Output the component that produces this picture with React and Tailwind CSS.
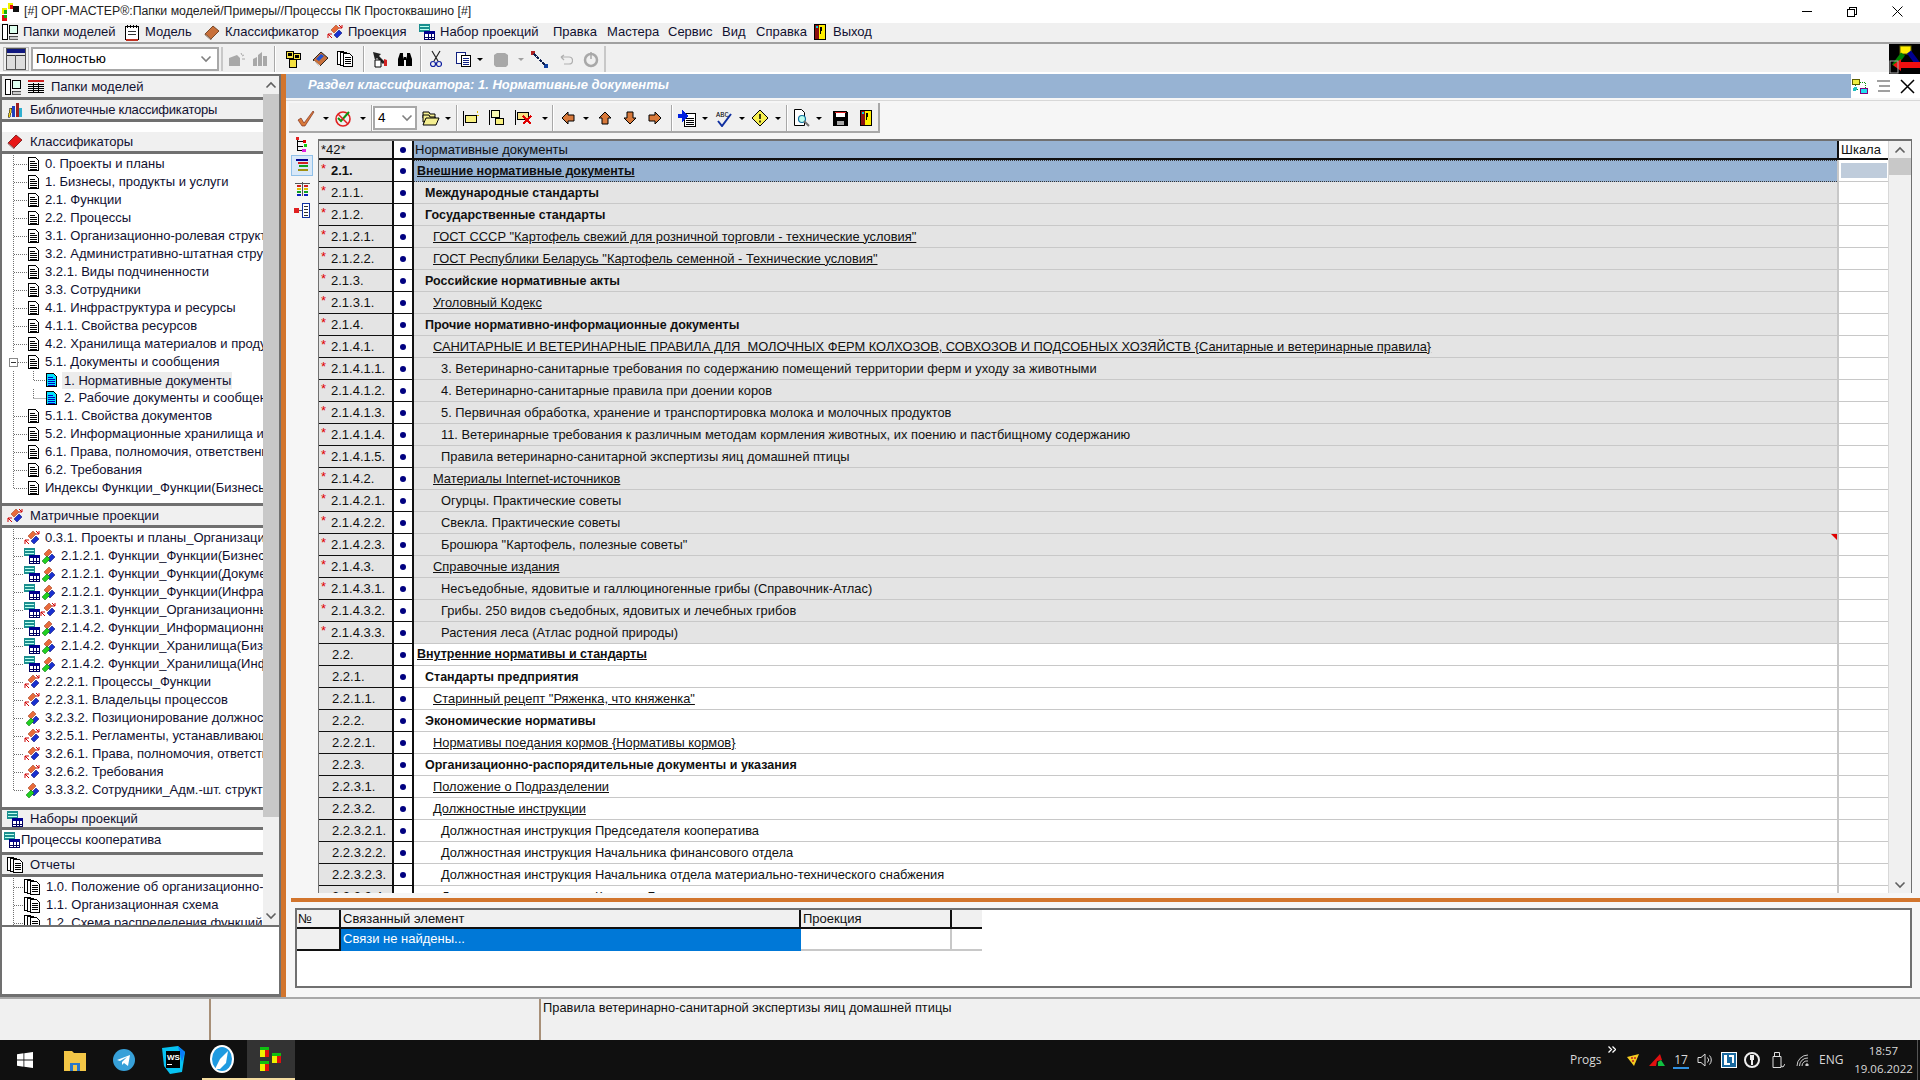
import React from 'react';

const Svg = ({ w = 16, h = 16, vb, className = '', children }) => (
	<svg width={w} height={h} viewBox={vb || `0 0 ${w} ${h}`} className={`shrink-0 ${className}`} shapeRendering="crispEdges">
		{children}
	</svg>
);

// small app icons, all drawn by hand
const DocIcon = ({ blue }) => (
	<Svg w={11} h={14}>
		<path d="M.5.5h7l3 3v10H.5z" fill={blue ? '#00e0ff' : '#fff'} stroke="#000" />
		<path d="M2 4h5M2 6h7M2 8h7M2 10h7M2 12h7" stroke={blue ? '#0000c0' : '#000'} />
	</Svg>
);
const ReportIcon = () => (
	<Svg w={16} h={16}>
		<path d="M.5.5h6v13h-6z" fill="#fff" stroke="#000" />
		<path d="M3.5 1.5h6v13h-6z" fill="#fff" stroke="#000" />
		<path d="M6.5 2.5h6l3 3v10h-9z" fill="#fff" stroke="#000" />
		<path d="M8 6h6M8 8h6M8 10h6M8 12h6" stroke="#000" />
	</Svg>
);
const SetIcon = () => (
	<Svg w={16} h={16}>
		<rect x="0" y="0" width="11" height="8" fill="#1a8f8f" />
		<path d="M1 2h9M1 5h9" stroke="#bfe" />
		<rect x="5.5" y="7.5" width="10" height="8" fill="#fff" stroke="#000060" />
		<rect x="5" y="7" width="11" height="3" fill="#000090" />
		<path d="M9 10v6M12.500 10v6M5 13h11" stroke="#000060" />
	</Svg>
);
const PairIcon = ({ tone = 'green' }) => (
	<svg width="16" height="16" viewBox="0 0 16 16" className="shrink-0">
		<path d="M9 1l3 3-5 5-3-3z" fill="#e86a3a" stroke="#903010" strokeWidth=".5" />
		<path d="M12 6l3 3-5 5-3-3z" fill="#1830d0" stroke="#000060" strokeWidth=".5" />
		{tone === 'green' && <path d="M7 8l3 3-5 5-3-3z" fill="#20d020" stroke="#086008" strokeWidth=".5" />}
		{tone === 'arrow' && <path d="M1 10l4 4M1 14v-4h4M12 1l3 3M15 1v3h-3" fill="none" stroke="#d00000" strokeWidth="1" />}
	</svg>
);
const Caret = ({ gray }) => <span className={`w-0 h-0 shrink-0 border-x-[3px] border-x-transparent border-t-[3px] ${gray ? 'border-t-[#a0a0a0]' : 'border-t-black'}`} />;
const CaretBox = () => <div className="flex items-center justify-center shrink-0 w-[15px] h-full"><Caret /></div>;
const Chevron = ({ up, gray }) => (
	<svg width="12" height="8" viewBox="0 0 12 8" className="shrink-0">
		<path d={up ? 'M1.500 6.500L6 2l4.500 4.500' : 'M1.500 1.500L6 6l4.500-4.500'} fill="none" stroke={gray ? '#808080' : '#606060'} strokeWidth="1.600" />
	</svg>
);
const Door = ({ s = 16 }) => (
	<Svg w={s} h={s} vb="0 0 16 16">
		<rect x="2.500" y=".5" width="11" height="15" fill="#ffee00" stroke="#000" />
		<path d="M3 1h4v14H3z" fill="#8a1010" />
		<path d="M8 3h2v4H9v3H8z" fill="#000" />
		<rect x="4" y="2" width="2" height="2" fill="#00d0e0" />
	</Svg>
);
const Sep = () => <span className="w-[2px] h-full shrink-0 bg-[#a8a8a8] border-r border-white" />;

const Arrow = ({ d }) => {
	const rot = { left: 'rotate-0', right: 'rotate-180', up: 'rotate-90', down: '-rotate-90' }[d];
	return (
		<svg width="14" height="14" viewBox="0 0 14 14" className={`shrink-0 ${rot}`}>
			<path d="M1 7l6-6v3h6v6H7v3z" fill="#d8793a" stroke="#000" strokeWidth="1" />
		</svg>
	);
};

const Tb = ({ w, children }) => <div className={`flex items-center justify-center shrink-0 h-full ${w}`}>{children}</div>;

const MainMenu = () => {
	const items = [
		['Папки моделей', 'w-[122px]', <Svg key="a" w={16} h={16}><rect x=".5" y=".5" width="5" height="15" fill="#fff" stroke="#000" /><rect x="7.500" y="1.500" width="8" height="8" fill="#dfe" stroke="#000" /><path d="M7 12h9v3H7z" fill="#ccc" stroke="#000" strokeWidth=".6" /></Svg>],
		['Модель', 'w-[80px]', <Svg key="b" w={16} h={17}><rect x="1.500" y="2.500" width="13" height="13" fill="#fff" stroke="#000" /><path d="M3 1v3M6 1v3M9 1v3M12 1v3" stroke="#000" /><path d="M4 7h8M4 10h8" stroke="#333" /><path d="M2 15h12v2H2z" fill="#c03020" /></Svg>],
		['Классификатор', 'w-[123px]', <svg key="c" width="16" height="16" viewBox="0 0 16 16" className="shrink-0"><path d="M1 10L9 2l6 5-8 8z" fill="#c8703a" stroke="#603010" strokeWidth=".8" /><path d="M1 10l6 5v1l-6-5z" fill="#eee" stroke="#603010" strokeWidth=".5" /></svg>],
		['Проекция', 'w-[92px]', <PairIcon key="d" tone="arrow" />],
		['Набор проекций', 'w-[136px]', <SetIcon key="e" />],
	];
	const plain = [['Правка', 'w-[54px]'], ['Мастера', 'w-[61px]'], ['Сервис', 'w-[54px]'], ['Вид', 'w-[34px]'], ['Справка', 'w-[56px]']];
	return (
		<div className="flex items-center h-[21px] pb-[1px] bg-[#f0f0f0] border-b-2 border-[#a0a0a0] shrink-0 text-[13px] text-[#101030] whitespace-nowrap">
			{items.map(([t, w, ic]) => (
				<div key={t} className={`flex items-center gap-[5px] shrink-0 pl-[2px] ${w}`}>{ic}<span>{t}</span></div>
			))}
			{plain.map(([t, w]) => <div key={t} className={`shrink-0 ${w}`}>{t}</div>)}
			<Door />
			<span className="ml-[5px]">Выход</span>
		</div>
	);
};

const TopToolbar = () => (
	<div className="flex h-[30px] bg-[#f0f0f0] shrink-0 pt-[2px] border-b-[2px] border-white">
		<div className="flex items-center h-full pl-[3px]">
			<div className="w-[26px] h-[24px] border border-[#bbb] flex items-center justify-center">
				<Svg w={20} h={22}>
					<rect x=".5" y=".5" width="19" height="21" fill="#ddd" stroke="#555" />
					<rect x="1" y="1" width="18" height="4" fill="#101880" />
					<path d="M1 7h18" stroke="#333" /><path d="M9.500 7v14" stroke="#555" />
				</Svg>
			</div>
			<div className="ml-[2px] w-[188px] h-[24px] border-2 border-[#a8a8a8] bg-white flex items-center justify-between pl-[3px] pr-[5px] text-[13.500px]">
				<span>Полностью</span><Chevron gray />
			</div>
			<span className="w-[2px] h-[24px] ml-[2px] mr-[2px] bg-[#c8c8c8]" />
		</div>
		<Tb w="w-[23px]"><svg width="18" height="16" viewBox="0 0 18 16"><path d="M1 15V7l8-3 3 3v8z" fill="#a8a8a8" /><path d="M13 2l1 2M16 4l-2 1M17 8h-3" stroke="#a8a8a8" /></svg></Tb>
		<Tb w="w-[24px]"><svg width="16" height="16" viewBox="0 0 16 16"><path d="M1 15V8l4-2v9zM6 15V4l4-3v14zM11 15V5h4v10z" fill="#a8a8a8" /></svg></Tb>
		<Tb w="w-[6px]"><Sep /></Tb>
		<Tb w="w-[30px]"><Svg w={16} h={17}><rect x="1.500" y=".5" width="7" height="7" fill="#f4e040" stroke="#000" /><rect x="8.500" y="2.500" width="7" height="6" fill="#f4e040" stroke="#000" /><rect x="4.500" y="8.500" width="7" height="8" fill="#f4e040" stroke="#000" /><path d="M3 2h4v3H3zM10 4h4v3h-4z" fill="#000" /></Svg></Tb>
		<Tb w="w-[24px]"><svg width="17" height="16" viewBox="0 0 17 16"><path d="M1 9l8-8 7 6-8 8z" fill="#c8703a" stroke="#000" strokeWidth=".8" /><path d="M4 8l5-5 3 2-5 5z" fill="#2050d0" /><path d="M2 10l6 5" stroke="#fff" /></svg></Tb>
		<Tb w="w-[26px]"><ReportIcon /></Tb>
		<Tb w="w-[12px]"><Sep /></Tb>
		<Tb w="w-[20px]"><svg width="17" height="18" viewBox="0 0 17 18"><path d="M1 2l8 2-2 2 6 6-2 2-6-6-2 2z" fill="#222" /><path d="M3 10h6v7H3z" fill="#fff" stroke="#000" /><path d="M12 9l3 1v6h-3z" fill="#d02020" /></svg></Tb>
		<Tb w="w-[30px]"><svg width="16" height="15" viewBox="0 0 16 15"><path d="M3 1h3v3l1 3v7H1V7zM10 1h3l2 6v7H9V7l1-3zM7 5h2v3H7z" fill="#000" /></svg></Tb>
		<Tb w="w-[2px]"><Sep /></Tb>
		<Tb w="w-[28px]"><svg width="12" height="18" viewBox="0 0 12 18"><path d="M2 1l6 10M10 1L4 11" stroke="#222" strokeWidth="1.200" /><circle cx="3" cy="14" r="2.500" fill="none" stroke="#1020a0" strokeWidth="1.200" /><circle cx="9" cy="14" r="2.500" fill="none" stroke="#1020a0" strokeWidth="1.200" /></svg></Tb>
		<Tb w="w-[26px]"><Svg w={15} h={15}><rect x=".5" y=".5" width="9" height="11" fill="#fff" stroke="#102080" /><rect x="5.500" y="3.500" width="9" height="11" fill="#fff" stroke="#000" /><path d="M7 6h6M7 8h6M7 10h6M7 12h6" stroke="#102080" /></Svg></Tb>
		<Tb w="w-[8px]"><Caret /></Tb>
		<Tb w="w-[34px]"><svg width="17" height="15" viewBox="0 0 17 15"><path d="M1 3l3-2h8l3 2v10l-2 2H3l-2-2z" fill="#a8a8a8" /></svg></Tb>
		<Tb w="w-[6px]"><Caret gray /></Tb>
		<Tb w="w-[30px]"><Svg w={17} h={17}><rect x="0" y="0" width="4" height="4" fill="#b02020" /><rect x="13" y="13" width="4" height="4" fill="#1040a0" /><path d="M3 3l11 11" stroke="#102050" strokeWidth="2" strokeDasharray="3 1" /></Svg></Tb>
		<Tb w="w-[24px]"><svg width="13" height="11" viewBox="0 0 13 11"><path d="M1 3h8a3 3 0 010 7H4M1 3l3-2M1 3l3 3" fill="none" stroke="#b0b0b0" strokeWidth="1.200" /></svg></Tb>
		<Tb w="w-[26px]"><svg width="16" height="17" viewBox="0 0 16 17"><circle cx="8" cy="9" r="6" fill="none" stroke="#a8a8a8" strokeWidth="2.500" /><path d="M8 1v7" stroke="#a8a8a8" strokeWidth="1.500" /></svg></Tb>
		<span className="w-[2px] h-full bg-[#c8c8c8]" />
		<div className="ml-auto -mt-[2px] w-[31px] h-[30px] bg-black flex items-center justify-center">
			<svg width="31" height="30" viewBox="0 0 31 30">
				<rect x="11" y="2" width="11" height="8" fill="#ffee00" stroke="#606000" />
				<path d="M14 10L5 22" stroke="#008000" strokeWidth="5" />
				<path d="M20 8l9 12" stroke="#000090" strokeWidth="5" />
				<path d="M4 21l8-6v3h19v6H12v3z" fill="#f01010" />
				<rect x="1" y="17" width="8" height="12" fill="none" stroke="#aaa" strokeWidth="1" />
			</svg>
		</div>
	</div>
);

const TREE_1 = [
	'0. Проекты и планы', '1. Бизнесы, продукты и услуги', '2.1. Функции', '2.2. Процессы',
	'3.1. Организационно-ролевая структура', '3.2. Административно-штатная структура', '3.2.1. Виды подчиненности',
	'3.3. Сотрудники', '4.1. Инфраструктура и ресурсы', '4.1.1. Свойства ресурсов', '4.2. Хранилища материалов и продукции',
];
const TREE_2 = ['5.1.1. Свойства документов', '5.2. Информационные хранилища и потоки', '6.1. Права, полномочия, ответственность', '6.2. Требования', 'Индексы Функции_Функции(Бизнесы)'];
const MATRIX = [
	['0.3.1. Проекты и планы_Организационная', 'arrow', false], ['2.1.2.1. Функции_Функции(Бизнесы)', 'green', true], ['2.1.2.1. Функции_Функции(Документы)', 'green', true],
	['2.1.2.1. Функции_Функции(Инфраструктура)', 'green', true], ['2.1.3.1. Функции_Организационные', 'arrow', true], ['2.1.4.2. Функции_Информационные', 'green', true],
	['2.1.4.2. Функции_Хранилища(Бизнесы)', 'green', true], ['2.1.4.2. Функции_Хранилища(Инфра)', 'green', true], ['2.2.2.1. Процессы_Функции', 'arrow', false],
	['2.2.3.1. Владельцы процессов', 'arrow', false], ['3.2.3.2. Позиционирование должностей', 'green', false], ['3.2.5.1. Регламенты, устанавливающие', 'arrow', false],
	['3.2.6.1. Права, полномочия, ответственность', 'arrow', false], ['3.2.6.2. Требования', 'arrow', false], ['3.3.3.2. Сотрудники_Адм.-шт. структура', 'green', false],
];

const Branch = ({ w = 15, last }) => (
	<svg width={w} height="18" viewBox={`0 0 ${w} 18`} className="shrink-0">
		<path d={`M.5 0V${last ? 9 : 18}M1 9.500H${w}`} stroke="#707070" strokeDasharray="1 1" fill="none" />
	</svg>
);

const TreeRow = ({ icon, children, last, w, gap = 'gap-[6px]' }) => (
	<div className="flex items-center h-[18px] pl-[11px] whitespace-nowrap overflow-hidden">
		<Branch last={last} w={w} />
		<span className={`flex items-center ${gap}`}>{icon}<span>{children}</span></span>
	</div>
);

const PanelHead = ({ icon, children, tall, gap = 'gap-[7px]' }) => (
	<div className={`flex items-center ${gap} pl-[5px] border-b-[3px] border-[#707070] bg-[#f0f0f0] shrink-0 ${tall || 'h-[22px]'}`}>
		{icon}<span className="whitespace-nowrap">{children}</span>
	</div>
);

const BooksIcon = () => (
	<Svg w={16} h={16}><path d="M1 15l2-9h2l-2 9z" fill="#f0d020" stroke="#000" strokeWidth=".5" /><rect x="5" y="4" width="3" height="11" fill="#2040c0" /><rect x="8.500" y="1" width="3" height="14" fill="#a02020" /><rect x="12" y="6" width="3" height="9" fill="#30b0d0" /></Svg>
);
const RedBook = () => (
	<svg width="16" height="15" viewBox="0 0 16 15" className="shrink-0"><path d="M1 9l8-8 6 5-8 8z" fill="#e81818" stroke="#701010" strokeWidth=".8" /><path d="M1 9l6 5v1L1 10z" fill="#ddd" stroke="#701010" strokeWidth=".4" /></svg>
);

const LeftPanel = () => (
	<div className="w-[281px] shrink-0 flex flex-col bg-white border-2 border-[#707070] border-b-[3px] overflow-hidden">
		<div className="flex h-[849px] shrink-0">
			<div className="w-[261px] shrink-0 flex flex-col overflow-hidden pt-[1px] bg-[#f0f0f0] text-[13px] text-[#101030]">
				<PanelHead tall="h-[23px]" icon={
					<span className="flex items-center gap-[7px] -ml-[2px]">
						<Svg w={16} h={16}><rect x=".5" y=".5" width="5" height="15" fill="#fff" stroke="#000" /><rect x="7.500" y="1.500" width="8" height="8" fill="#dfe" stroke="#000" /><path d="M7 12h9v3H7z" fill="#ccc" stroke="#000" strokeWidth=".6" /></Svg>
						<Svg w={16} h={14}><path d="M0 1h16" stroke="#d02020" strokeWidth="2" /><path d="M0 4h16M0 6h16M0 8h16M0 10h16M0 12h16M5 3v10M10.500 3v10" stroke="#000" /></Svg>
					</span>
				}>Папки моделей</PanelHead>
				<PanelHead icon={<BooksIcon />}><span className="tracking-[-0.2px]">Библиотечные классификаторы</span></PanelHead>
				<div className="h-[10px] shrink-0 bg-white" />
				<PanelHead icon={<RedBook />}>Классификаторы</PanelHead>
				<div className="pt-[1px] shrink-0 bg-white">
					{TREE_1.map(t => <TreeRow key={t} icon={<DocIcon />}>{t}</TreeRow>)}
					<div className="flex items-center h-[18px] pl-[7px] whitespace-nowrap">
						<span className="w-[9px] h-[9px] border border-[#888] bg-white flex items-center justify-center shrink-0"><span className="w-[5px] h-[1px] bg-[#333]" /></span>
						<svg width="10" height="18" className="shrink-0"><path d="M0 9.500H10" stroke="#707070" strokeDasharray="1 1" /></svg>
						<span className="flex items-center gap-[6px]"><DocIcon /><span>5.1. Документы и сообщения</span></span>
					</div>
					<div className="flex items-center h-[18px] pl-[11px] whitespace-nowrap">
						<svg width="33" height="18" className="shrink-0"><path d="M.5 0V18M20.500 0V9.500H33" stroke="#707070" strokeDasharray="1 1" fill="none" /></svg>
						<DocIcon blue />
						<span className="ml-[5px] px-[2px] bg-[#ececec] w-[170px] leading-[17px]">1. Нормативные документы</span>
					</div>
					<div className="flex items-center h-[18px] pl-[11px] whitespace-nowrap overflow-hidden">
						<svg width="33" height="18" className="shrink-0"><path d="M.5 0V18M20.500 0V9.500" stroke="#707070" strokeDasharray="1 1" fill="none" /><path d="M20.500 9.500H33" stroke="#707070" strokeDasharray="1 1" /></svg>
						<DocIcon blue />
						<span className="ml-[7px]">2. Рабочие документы и сообщения</span>
					</div>
					{TREE_2.map((t, i) => <TreeRow key={t} last={i === TREE_2.length - 1} icon={<DocIcon />}>{t}</TreeRow>)}
				</div>
				<div className="h-[9px] shrink-0 bg-white border-b-[3px] border-[#707070]" />
				<PanelHead icon={<PairIcon tone="arrow" />}>Матричные проекции</PanelHead>
				<div className="pt-[1px] shrink-0 bg-white">
					{MATRIX.map(([t, tone, dbl], i) => (
						<TreeRow key={t} w={11} last={i === MATRIX.length - 1} gap="gap-[5px]" icon={dbl ? <span className="flex"><SetIcon /><PairIcon tone={tone} /></span> : <PairIcon tone={tone} />}>{t}</TreeRow>
					))}
				</div>
				<div className="h-[11px] shrink-0 bg-white border-b-[3px] border-[#707070]" />
				<PanelHead tall="h-[20px]" icon={<SetIcon />}>Наборы проекций</PanelHead>
				<div className="flex items-center h-[25px] shrink-0 pl-[2px] pb-[2px] gap-[1px] bg-white border-b-[3px] border-[#707070]"><SetIcon /><span>Процессы кооператива</span></div>
				<PanelHead icon={<ReportIcon />}>Отчеты</PanelHead>
				<div className="pt-[1px] flex-1 bg-white overflow-hidden">
					{['1.0. Положение об организационно-функциональной', '1.1. Организационная схема', '1.2. Схема распределения функций'].map(t => (
						<TreeRow key={t} w={11} icon={<ReportIcon />}>{t}</TreeRow>
					))}
				</div>
			</div>
			<div className="w-[16px] shrink-0 bg-[#f0f0f0] flex flex-col">
				<div className="h-[18px] flex items-center justify-center shrink-0"><Chevron up /></div>
				<div className="h-[723px] bg-[#c8c8c8] shrink-0" />
				<div className="flex-1" />
				<div className="h-[18px] flex items-center justify-center shrink-0"><Chevron /></div>
			</div>
		</div>
		<div className="flex-1 border-t-2 border-[#707070]" />
	</div>
);

const R = (star, code, title, lvl, kind) => ({ star, code, title, lvl, kind });
const ROWS = [
	R(1, '2.1.', 'Внешние нормативные документы', 0, 'bu'),
	R(1, '2.1.1.', 'Международные стандарты', 1, 'b'),
	R(1, '2.1.2.', 'Государственные стандарты', 1, 'b'),
	R(1, '2.1.2.1.', 'ГОСТ СССР "Картофель свежий для розничной торговли - технические условия"', 2, 'u'),
	R(1, '2.1.2.2.', 'ГОСТ Республики Беларусь "Картофель семенной - Технические условия"', 2, 'u'),
	R(1, '2.1.3.', 'Российские нормативные акты', 1, 'b'),
	R(1, '2.1.3.1.', 'Уголовный Кодекс', 2, 'u'),
	R(1, '2.1.4.', 'Прочие нормативно-информационные документы', 1, 'b'),
	R(1, '2.1.4.1.', 'САНИТАРНЫЕ И ВЕТЕРИНАРНЫЕ ПРАВИЛА ДЛЯ  МОЛОЧНЫХ ФЕРМ КОЛХОЗОВ, СОВХОЗОВ И ПОДСОБНЫХ ХОЗЯЙСТВ {Санитарные и ветеринарные правила}', 2, 'u'),
	R(1, '2.1.4.1.1.', '3. Ветеринарно-санитарные требования по содержанию помещений территории ферм и уходу за животными', 3),
	R(1, '2.1.4.1.2.', '4. Ветеринарно-санитарные правила при доении коров', 3),
	R(1, '2.1.4.1.3.', '5. Первичная обработка, хранение и транспортировка молока и молочных продуктов', 3),
	R(1, '2.1.4.1.4.', '11. Ветеринарные требования к различным методам кормления животных, их поению и пастбищному содержанию', 3),
	R(1, '2.1.4.1.5.', 'Правила ветеринарно-санитарной экспертизы яиц домашней птицы', 3),
	R(1, '2.1.4.2.', 'Материалы Internet-источников', 2, 'u'),
	R(1, '2.1.4.2.1.', 'Огурцы. Практические советы', 3),
	R(1, '2.1.4.2.2.', 'Свекла. Практические советы', 3),
	R(1, '2.1.4.2.3.', 'Брошюра "Картофель, полезные советы"', 3, 'flag'),
	R(1, '2.1.4.3.', 'Справочные издания', 2, 'u'),
	R(1, '2.1.4.3.1.', 'Несъедобные, ядовитые и галлюциногенные грибы (Справочник-Атлас)', 3),
	R(1, '2.1.4.3.2.', 'Грибы. 250 видов съедобных, ядовитых и лечебных грибов', 3),
	R(1, '2.1.4.3.3.', 'Растения леса (Атлас родной природы)', 3),
	R(0, '2.2.', 'Внутренние нормативы и стандарты', 0, 'bu'),
	R(0, '2.2.1.', 'Стандарты предприятия', 1, 'b'),
	R(0, '2.2.1.1.', 'Старинный рецепт "Ряженка, что княженка"', 2, 'u'),
	R(0, '2.2.2.', 'Экономические нормативы', 1, 'b'),
	R(0, '2.2.2.1.', 'Нормативы поедания кормов {Нормативы кормов}', 2, 'u'),
	R(0, '2.2.3.', 'Организационно-распорядительные документы и указания', 1, 'b'),
	R(0, '2.2.3.1.', 'Положение о Подразделении', 2, 'u'),
	R(0, '2.2.3.2.', 'Должностные инструкции', 2, 'u'),
	R(0, '2.2.3.2.1.', 'Должностная инструкция Председателя кооператива', 3),
	R(0, '2.2.3.2.2.', 'Должностная инструкция Начальника финансового отдела', 3),
	R(0, '2.2.3.2.3.', 'Должностная инструкция Начальника отдела материально-технического снабжения', 3),
	R(0, '2.2.3.2.4.', 'Должностная инструкция Кассира Бухгалтерии', 3),
];
const INDENT = ['pl-[3px]', 'pl-[11px]', 'pl-[19px]', 'pl-[27px]'];

const Dot = () => <span className="w-[6px] h-[6px] rounded-full bg-[#000080]" />;

const Row = ({ r, idx }) => {
	const selected = idx === 0;
	const gray = !!r.star;
	const txt = r.kind === 'bu' ? 'font-bold underline text-[12.500px]' : r.kind === 'b' ? 'font-bold text-[12.500px] pt-[1px]' : r.kind === 'u' ? 'underline text-[12.870px]' : 'text-[12.870px]';
	return (
		<div className="flex h-[22px] shrink-0">
			<div className={`w-[75px] shrink-0 flex items-center bg-[#e4e4e4] border-b border-r-2 border-[#101010] pl-[2px] ${r.kind === 'bu' && r.star ? 'font-bold' : ''}`}>
				<span className="w-[10px] shrink-0 text-[#e00000] font-normal self-start leading-[18px]">{r.star ? '*' : ''}</span>
				<span className={r.star ? '' : 'pl-[1px]'}>{r.code}</span>
			</div>
			<div className="w-[20px] shrink-0 flex items-center justify-center bg-white border-b border-r-2 border-[#101010]"><Dot /></div>
			<div className={`relative flex-1 flex items-center whitespace-pre border-b ${selected ? 'bg-[#97b3d3] border-dotted border-[#333] border-t' : gray ? 'bg-[#e4e4e4] border-[#c8c8c8]' : 'bg-white border-[#c8c8c8]'} ${INDENT[r.lvl]} ${txt}`}>
				{r.title}
				{r.kind === 'flag' && <span className="absolute right-0 top-0 w-0 h-0 border-l-[6px] border-l-transparent border-t-[6px] border-t-[#e00000]" />}
			</div>
			<div className="w-[51px] shrink-0 bg-white border-b border-l-2 border-[#c8c8c8] p-[2px]">
				{selected && <div className="w-[46px] h-[15px] mt-[1px] bg-[#bfccdb]" />}
			</div>
		</div>
	);
};

const GridToolbar = () => (
	<div className="flex items-center h-[30px] w-[591px] ml-[3px] pt-[2px] bg-[#f0f0f0] border-b-2 border-r-2 border-[#a8a8a8] shrink-0">
		<Tb w="w-[24px] ml-[5px]"><svg width="18" height="17" viewBox="0 0 18 17"><path d="M1 10l3-2 3 5L16 1l1 1-9 14H5z" fill="#d8793a" stroke="#702010" strokeWidth=".6" /></svg></Tb>
		<CaretBox />
		<Tb w="w-[22px]"><svg width="18" height="17" viewBox="0 0 18 17"><circle cx="8" cy="9" r="7" fill="none" stroke="#e02020" strokeWidth="1.600" /><path d="M3 8l3 3 8-9" fill="none" stroke="#109010" strokeWidth="2" /><path d="M3 4l10 10" stroke="#e02020" strokeWidth="1.500" /></svg></Tb>
		<CaretBox />
		<Tb w="w-[2px] ml-[1px]"><Sep /></Tb>
		<div className="w-[44px] h-[24px] border-2 border-[#a8a8a8] bg-white flex items-center justify-between pl-[3px] pr-[2px] text-[13.500px] shrink-0"><span>4</span><Chevron gray /></div>
		<Tb w="w-[19px] ml-[4px]"><svg width="18" height="18" viewBox="0 0 18 18"><path d="M1 3h6l1 2h5v4H1z" fill="#f4ee90" stroke="#000" /><path d="M1 6h6l1 2h5v5H1z" fill="#f4ee90" stroke="#000" /><path d="M1 16l3-7h13l-3 7z" fill="#f4ee90" stroke="#000" /></svg></Tb>
		<CaretBox />
		<Tb w="w-[2px] ml-[1px]"><Sep /></Tb>
		<Tb w="w-[26px]"><Svg w={18} h={17}><path d="M1.500 1v15" stroke="#000" /><rect x="3.500" y="5.500" width="11" height="7" fill="#f8f080" stroke="#000" /><path d="M15 1l1 2M17 5l-2 0" stroke="#e0c000" /></Svg></Tb>
		<Tb w="w-[26px]"><Svg w={18} h={18}><path d="M1.500 1v15" stroke="#000" /><rect x="3.500" y="1.500" width="8" height="7" fill="#f8f8b0" stroke="#000" /><rect x="7.500" y="9.500" width="8" height="6" fill="#f8f080" stroke="#000" /></Svg></Tb>
		<Tb w="w-[27px]"><Svg w={20} h={18}><path d="M1.500 1v15" stroke="#000" /><rect x="3.500" y="3.500" width="11" height="7" fill="#f8e080" stroke="#000" /><path d="M9 7l8 8M17 7l-8 8" stroke="#e00000" strokeWidth="2" /></Svg></Tb>
		<CaretBox />
		<Tb w="w-[2px]"><Sep /></Tb>
		<Tb w="w-[21px] ml-[3px]"><Arrow d="left" /></Tb>
		<CaretBox />
		<Tb w="w-[24px]"><Arrow d="up" /></Tb>
		<Tb w="w-[26px]"><Arrow d="down" /></Tb>
		<Tb w="w-[24px]"><Arrow d="right" /></Tb>
		<Tb w="w-[2px] ml-[4px]"><Sep /></Tb>
		<Tb w="w-[21px] ml-[3px]"><Svg w={18} h={17}><rect x="6.500" y="3.500" width="11" height="13" fill="#fff" stroke="#000" /><path d="M8 8h8M8 10h8M8 12h8M8 14h8" stroke="#000" /><path d="M0 4h4V0l6 6-6 6V8H0z" fill="#0020e0" /></Svg></Tb>
		<CaretBox />
		<Tb w="w-[22px]"><svg width="17" height="17" viewBox="0 0 17 17"><path d="M3 11l4 5L16 4" fill="none" stroke="#1030a0" strokeWidth="2" /><text x="1" y="7" fontSize="7" fontFamily="Liberation Mono" fill="#000">ABC</text></svg></Tb>
		<CaretBox />
		<Tb w="w-[20px] ml-[1px]"><svg width="18" height="18" viewBox="0 0 18 18"><path d="M9 1l8 8-8 8-8-8z" fill="#f8f050" stroke="#000" /><path d="M9 5v5M9 11.500v2" stroke="#000" strokeWidth="1.500" /></svg></Tb>
		<CaretBox />
		<Tb w="w-[2px] ml-[1px]"><Sep /></Tb>
		<Tb w="w-[20px] ml-[3px]"><svg width="18" height="18" viewBox="0 0 18 18"><path d="M2.500.5h7l3 3v13h-10z" fill="#fff" stroke="#000" /><circle cx="10" cy="10" r="3.500" fill="#bfe" stroke="#1070a0" strokeWidth="1.200" /><path d="M12 12l5 5" stroke="#707070" strokeWidth="2" /></svg></Tb>
		<CaretBox />
		<Tb w="w-[28px]"><Svg w={15} h={15}><path d="M0 0h13l2 2v13H0z" fill="#000" /><rect x="3" y="1" width="9" height="5" fill="#fff" /><rect x="2" y="1" width="11" height="1" fill="#e02020" /><rect x="4" y="10" width="7" height="4" fill="#aaa" /></Svg></Tb>
		<Tb w="w-[24px]"><Door /></Tb>
	</div>
);

const SideStrip = () => (
	<div className="w-[29px] ml-[3px] pr-[3px] -mt-[3px] shrink-0 flex flex-col items-center">
		<div className="h-[17px] flex items-center"><Svg w={12} h={15}><path d="M1.500 0v14M2 4h5M2 9h5M2 13h4" stroke="#000" /><rect x="0" y="0" width="3" height="3" fill="#e02020" /><rect x="7" y="3" width="3" height="3" fill="#d00" /><rect x="8" y="7" width="3" height="3" fill="#10d010" /><rect x="6" y="12" width="4" height="3" fill="#e020e0" /></Svg></div>
		<div className="w-[22px] h-[21px] mt-[2px] bg-[#d8e8f8] border border-[#90c0e8] flex items-center justify-center"><Svg w={14} h={13}><path d="M1 1h12" stroke="#000090" strokeWidth="2" /><path d="M3 4h10" stroke="#d02020" strokeWidth="2" /><path d="M4 7h9" stroke="#10a020" strokeWidth="2" /><path d="M3 11h10" stroke="#a09010" strokeWidth="2" /></Svg></div>
		<div className="h-[20px] mt-[3px] flex items-center"><Svg w={15} h={14}><path d="M0 1h15M7.500 0v14" stroke="#555" /><path d="M2 4h4M9 4h4" stroke="#d02020" strokeWidth="2" /><path d="M2 7h4M9 7h4" stroke="#e0c000" strokeWidth="2" /><path d="M2 10h4M9 10h4" stroke="#10a020" strokeWidth="2" /><path d="M2 13h4M9 13h4" stroke="#1020c0" strokeWidth="2" /></Svg></div>
		<div className="h-[20px] mt-[1px] flex items-center"><Svg w={16} h={15}><rect x="0" y="5" width="5" height="5" fill="#e02020" /><path d="M5 7h3M8 1v13" stroke="#555" /><rect x="8.500" y=".5" width="7" height="14" fill="#fff" stroke="#1030a0" /><path d="M10 3h4M10 6h4M10 9h4M10 12h4" stroke="#333" /></Svg></div>
	</div>
);

const Grid = () => (
	<div className="flex flex-1 min-h-0 text-[13px] text-[#101010]">
		<SideStrip />
		<div className="flex flex-1 min-w-0 border-t-2 border-l border-r border-[#707070] mr-[8px]">
			<div className="flex-1 min-w-0 flex flex-col overflow-hidden">
				<div className="flex h-[19px] shrink-0">
					<div className="w-[75px] shrink-0 bg-[#e4e4e4] border-b-2 border-r-2 border-[#101010] pl-[2px] flex items-center">*42*</div>
					<div className="w-[20px] shrink-0 flex items-center justify-center bg-white border-b-2 border-r-2 border-[#101010]"><Dot /></div>
					<div className="flex-1 bg-[#97b3d3] border-b-2 border-[#101010] pl-[1px] flex items-center">Нормативные документы</div>
					<div className="w-[51px] shrink-0 bg-white border-b-2 border-l-2 border-[#101010] pl-[2px] flex items-center">Шкала</div>
				</div>
				{ROWS.map((r, i) => <Row key={r.code} r={r} idx={i} />)}
			</div>
			<div className="w-[23px] shrink-0 bg-[#f0f0f0] border-l border-[#d8d8d8] flex flex-col">
				<div className="h-[17px] flex items-center justify-center"><Chevron up /></div>
				<div className="h-[17px] bg-[#c8c8c8]" />
				<div className="flex-1" />
				<div className="h-[17px] flex items-center justify-center"><Chevron /></div>
			</div>
		</div>
	</div>
);

const Links = () => (
	<div className="h-[95px] shrink-0 pt-[6px] pb-[9px] pl-[9px] pr-[8px] flex text-[13px] text-[#101010]">
		<div className="flex-1 border-2 border-[#707070] bg-white">
			<div className="w-[685px]">
				<div className="flex items-center h-[19px] bg-[#f0f0f0] border-b-2 border-[#101010]">
					<div className="h-full w-[44px] pl-[1px] border-r-2 border-[#101010] flex items-center">№</div>
					<div className="h-full w-[460px] pl-[2px] border-r-2 border-[#101010] flex items-center">Связанный элемент</div>
					<div className="h-full w-[151px] pl-[2px] border-r-2 border-[#101010] flex items-center">Проекция</div>
					<div className="flex-1" />
				</div>
				<div className="flex h-[22px]">
					<div className="w-[44px] bg-[#f0f0f0] border-b-2 border-r-2 border-[#101010]" />
					<div className="w-[460px] pl-[2px] pb-[2px] bg-[#0078d7] text-white flex items-center">Связи не найдены...</div>
					<div className="w-[151px] border-b-2 border-r-2 border-[#c8c8c8]" />
					<div className="flex-1 border-b-2 border-[#c8c8c8]" />
				</div>
			</div>
		</div>
	</div>
);

const RightPanel = () => (
	<div className="flex-1 min-w-0 flex flex-col bg-[#f6f6f6]">
		<div className="flex h-[24px] shrink-0 bg-white">
			<div className="flex items-center w-[1565px] shrink-0 pl-[22px] pb-[2px] bg-[#97b3d3] text-white italic font-bold text-[13px] whitespace-nowrap">Раздел классификатора: 1. Нормативные документы</div>
			<Tb w="w-[18px]"><Svg w={16} h={15}><rect x=".5" y=".5" width="7" height="5" fill="#f0f040" stroke="#606000" /><rect x="8.500" y="9.500" width="7" height="5" fill="#20e0f0" stroke="#800080" /><path d="M8 3h5v6M3 6v4h4" stroke="#109010" fill="none" strokeDasharray="1 1" /><circle cx="3" cy="10" r="2" fill="#20c0c0" /></Svg></Tb>
			<Tb w="w-[29px]"><Svg w={13} h={12}><path d="M0 1h13M2 6h11M1 11h12" stroke="#a0a0a0" strokeWidth="2" /></Svg></Tb>
			<Tb w="w-[18px]"><svg width="15" height="15" viewBox="0 0 15 15"><path d="M1 1l13 13M14 1L1 14" stroke="#000" strokeWidth="1.500" /></svg></Tb>
		</div>
		<div className="h-[1px] mt-[2px] mb-[2px] bg-[#d8d8d8] shrink-0" />
		<div className="h-[30px] shrink-0 flex"><GridToolbar /></div>
		<div className="h-[6px] shrink-0" />
		<Grid />
		<div className="h-[4px] shrink-0 mt-[5px] bg-[#d2752d] ml-[5px]" />
		<Links />
	</div>
);

const Tile = ({ w = 'w-[49px]', className = '', children }) => (
	<div className={`h-full shrink-0 flex items-center justify-center ${w} ${className}`}>{children}</div>
);

const Taskbar = () => (
	<div className="h-[40px] shrink-0 bg-[#101010] flex items-center">
		<Tile>
			<svg width="16" height="16" viewBox="0 0 16 16"><path d="M0 2.200l6.500-.9v6.300H0zM7.300 1.200L16 0v7.600H7.300zM0 8.400h6.500v6.300L0 13.800zM7.300 8.400H16V16l-8.700-1.200z" fill="#fff" /></svg>
		</Tile>
		<Tile w="w-[51px]">
			<svg width="22" height="21" viewBox="0 0 22 21"><path d="M0 1h8l2 2h12v18H0z" fill="#f3c646" /><rect x="6" y="13" width="10" height="8" fill="#2a78c8" /><rect x="9" y="15" width="4" height="6" fill="#f3c646" /></svg>
		</Tile>
		<Tile w="w-[48px]">
			<svg width="22" height="22" viewBox="0 0 22 22"><circle cx="11" cy="11" r="11" fill="#37a0d8" /><path d="M4 11l13-5-2 11-4-3-2 2v-3l5-5-7 4z" fill="#fff" /></svg>
		</Tile>
		<Tile w="w-[50px]">
			<svg width="24" height="28" viewBox="0 0 24 28"><path d="M1 2l16-2 7 6-3 20-12 2L3 20z" fill="#07c3f2" /><path d="M17 0l7 6-3 10z" fill="#087cfa" /><rect x="5" y="5" width="14" height="17" fill="#000" /><text x="6" y="14" fontSize="8" fontWeight="700" fontFamily="Liberation Sans" fill="#fff">WS</text><rect x="6" y="18" width="5" height="1" fill="#fff" /></svg>
		</Tile>
		<Tile w="w-[45px] ml-[4px] pr-[6px]" className="border-b-2 border-[#f4dca0]">
			<svg width="24" height="28" viewBox="0 0 24 28"><ellipse cx="12" cy="14" rx="12" ry="14" fill="#fff" /><ellipse cx="12" cy="14" rx="10" ry="12" fill="#1e9ae0" /><path d="M5 24l5-10 8-8-2 12-6 6z" fill="#fff" /></svg>
		</Tile>
		<Tile w="w-[48px]" className="bg-[#333] border-b-2 border-[#f4dca0]">
			<Svg w={24} h={24}>
				<rect x="1" y="0" width="9" height="10" fill="#f0f000" /><path d="M1 0h9v3H1z" fill="#10c010" /><rect x="6" y="3" width="4" height="7" fill="#e01010" />
				<rect x="13" y="6" width="9" height="10" fill="#f0f000" /><path d="M13 6h9v3h-9z" fill="#10c010" /><rect x="18" y="9" width="4" height="7" fill="#e01010" />
				<rect x="1" y="14" width="9" height="10" fill="#f0f000" /><path d="M1 14h9v3H1z" fill="#10c010" /><rect x="6" y="17" width="4" height="7" fill="#e01010" />
			</Svg>
		</Tile>
		<div className="ml-auto flex items-center h-full text-[#d8d8d8] font-['Open_Sans',sans-serif] mr-[2px]">
			<span className="text-[12px] w-[36px]">Progs</span>
			<div className="w-[18px] self-start pt-[6px] pl-[2px]"><svg width="8" height="7" viewBox="0 0 8 7" fill="none" stroke="#fff" strokeWidth="1.300" className="block"><path d="M.5.5l3 3-3 3M4.500.5l3 3-3 3" /></svg></div>
			<Tile w="w-[18px]"><svg width="14" height="14" viewBox="0 0 14 14"><path d="M1 4l12-3-5 12z" fill="#f4cc20" /><circle cx="6" cy="5" r="1" fill="#c02020" /><circle cx="9" cy="5" r="1" fill="#c02020" /><circle cx="7" cy="8" r="1" fill="#c02020" /></svg></Tile>
			<Tile w="w-[30px]"><svg width="16" height="12" viewBox="0 0 16 12"><path d="M0 12L11 0l2 6-5 1-1 5z" fill="#e01010" /><path d="M9 8l3-2 4 6H9z" fill="#10c040" /></svg></Tile>
			<Tile w="w-[18px]"><span className="w-[16px] text-[12px] leading-[15px] text-center border-b-2 border-[#3090e0]">17</span></Tile>
			<Tile w="w-[30px]"><svg width="16" height="14" viewBox="0 0 16 14" fill="none" stroke="#ddd"><path d="M1 4.500h3L8 1v12L4 9.500H1z" /><path d="M10.500 4.500a3.500 3.500 0 010 5M12.500 2.500a6.500 6.500 0 010 9" /></svg></Tile>
			<Tile w="w-[18px]"><svg width="16" height="16" viewBox="0 0 16 16" shapeRendering="crispEdges"><rect width="16" height="16" fill="#fff" /><rect x="1" y="1" width="14" height="14" fill="#1a6aa0" /><path d="M3 3h3v8h3v2H3zM8 3h5v8h-2V5H8z" fill="#fff" /></svg></Tile>
			<Tile w="w-[28px]"><svg width="16" height="16" viewBox="0 0 16 16"><circle cx="8" cy="8" r="7" fill="none" stroke="#eee" strokeWidth="2" /><path d="M6 3h4v5H9v5H7V8H6z" fill="#eee" /></svg></Tile>
			<Tile w="w-[24px]"><svg width="13" height="16" viewBox="0 0 13 16" fill="none" stroke="#ddd"><path d="M2.500.5h5v4h-5zM1 4.500h8v11H1zM9 14l2 1 2-3" /></svg></Tile>
			<Tile w="w-[24px]"><svg width="13" height="12" viewBox="0 0 13 12" fill="none" stroke="#ccc"><path d="M1 12a11 11 0 0111-11M3.500 12a8 8 0 018.500-8M6 12a5 5 0 016-5" /><circle cx="11" cy="11" r="1.200" fill="#ccc" /></svg></Tile>
			<span className="text-[12px] w-[33px] pl-[5px]">ENG</span>
			<div className="w-[70px] pl-[3px] text-[11.500px] leading-[18px] text-center">
				<div>18:57</div>
				<div>19.06.2022</div>
			</div>
			<span className="w-[1px] h-full bg-[#555]" />
		</div>
	</div>
);

export default function App() {
	return (
		<div className="w-[1920px] h-[1080px] flex flex-col overflow-hidden bg-white font-['Liberation_Sans',sans-serif] text-[13px] text-black">
			<div className="flex items-center h-[23px] shrink-0 bg-white">
				<Svg w={18} h={18} className="ml-[1px]">
					<rect x="7" y="0" width="5" height="6" fill="#f0f000" /><rect x="9" y="2" width="3" height="4" fill="#e01010" /><rect x="1" y="5" width="5" height="6" fill="#f0f000" /><rect x="3" y="7" width="3" height="4" fill="#10b010" /><rect x="12" y="3" width="6" height="6" fill="#101010" /><rect x="1" y="12" width="5" height="6" fill="#e01010" /><rect x="3" y="12" width="3" height="3" fill="#10b010" />
				</Svg>
				<span className="ml-[5px] text-[12.300px] text-[#222]">[#] ОРГ-МАСТЕР®:Папки моделей/Примеры//Процессы ПК Простоквашино [#]</span>
				<div className="ml-auto flex h-full items-center text-[#222]">
					<div className="w-[45px] flex justify-center"><span className="w-[10px] h-[1px] bg-black" /></div>
					<div className="w-[46px] flex justify-center"><svg width="10" height="10" viewBox="0 0 10 10" fill="none" stroke="#000" shapeRendering="crispEdges"><path d="M2.500 2.500V.5h7v7h-2" /><rect x=".5" y="2.500" width="7" height="7" fill="#fff" /></svg></div>
					<div className="w-[45px] flex justify-center"><svg width="11" height="11" viewBox="0 0 11 11" stroke="#000"><path d="M.5.5l10 10M10.500.5l-10 10" /></svg></div>
				</div>
			</div>
			<MainMenu />
			<TopToolbar />
			<div className="flex flex-1 min-h-0">
				<LeftPanel />
				<div className="w-[5px] shrink-0 bg-[#d2752d]" />
				<RightPanel />
			</div>
			<div className="flex h-[43px] shrink-0 bg-[#f0f0f0] border-t-2 border-[#a8a8a8] text-[13px] text-[#101010]">
				<div className="w-[211px] shrink-0 border-r-2 border-[#a89078]" />
				<div className="w-[329px] shrink-0 border-r-2 border-[#a89078] ml-[1px]" />
				<div className="pl-[1px] ml-[1px] leading-[17px] text-[12.870px]">Правила ветеринарно-санитарной экспертизы яиц домашней птицы</div>
			</div>
			<Taskbar />
		</div>
	);
}
